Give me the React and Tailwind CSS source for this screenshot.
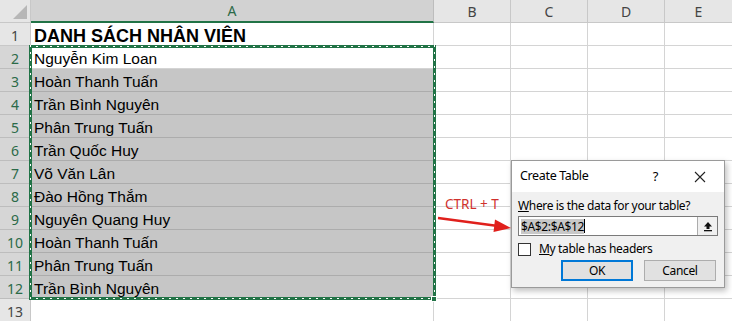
import React from "react";

const names = [
  "Nguyễn Kim Loan",
  "Hoàn Thanh Tuấn",
  "Trần Bình Nguyên",
  "Phân Trung Tuấn",
  "Trần Quốc Huy",
  "Võ Văn Lân",
  "Đào Hồng Thắm",
  "Nguyên Quang Huy",
  "Hoàn Thanh Tuấn",
  "Phân Trung Tuấn",
  "Trần Bình Nguyên",
];

const cellFont = { fontFamily: '"Liberation Sans", Arial, sans-serif' };
const uiFont = { fontFamily: '"Noto Sans", "Open Sans", sans-serif' };

function Row({ n, children, sel, bold, white }) {
  return (
    <div className="flex h-[23px]">
      <div
        className={`w-[31px] shrink-0 border-r border-b flex items-center justify-center pt-[3px] text-[14px] ${
          sel
            ? "bg-[#d6d6d6] text-[#2b6a48] border-b-[#bdbdbd] border-r-[#217346]"
            : "bg-[#e6e6e6] text-[#444] border-[#c8c8c8]"
        }`}
        style={uiFont}
      >
        {n}
      </div>
      <div
        className={`w-[403px] shrink-0 border-r border-b flex items-center pl-[3px] pt-[4px] text-black overflow-hidden whitespace-nowrap ${
          white ? "bg-white border-[#d4d4d4]" : sel ? "bg-[#c6c6c6] border-[#acacac]" : "bg-white border-[#d4d4d4]"
        } ${bold ? "font-bold text-[18px]" : "text-[15.5px]"}`}
        style={cellFont}
      >
        {children}
      </div>
      <div className="w-[77px] shrink-0 border-r border-b border-[#d4d4d4] bg-white" />
      <div className="w-[77px] shrink-0 border-r border-b border-[#d4d4d4] bg-white" />
      <div className="w-[77px] shrink-0 border-r border-b border-[#d4d4d4] bg-white" />
      <div className="flex-1 border-b border-[#d4d4d4] bg-white" />
    </div>
  );
}

export default function App() {
  return (
    <div className="relative w-[732px] h-[321px] overflow-hidden bg-white select-none">
      {/* column header */}
      <div className="flex h-[23px] text-[14px] text-[#444]" style={uiFont}>
        <div className="relative w-[31px] shrink-0 bg-[#e6e6e6] border-r border-b border-[#c8c8c8]">
          <svg className="absolute right-[3px] bottom-[3px]" width="14" height="14" viewBox="0 0 14 14">
            <polygon points="14,0 14,14 0,14" fill="#b7b7b7" />
          </svg>
        </div>
        <div className="w-[403px] shrink-0 bg-[#d2d2d2] border-r border-[#bdbdbd] border-b-2 border-b-[#217346] flex items-center justify-center text-[#2b6a48]">
          A
        </div>
        <div className="w-[77px] shrink-0 bg-[#e6e6e6] border-r border-b border-[#c8c8c8] flex items-center justify-center">B</div>
        <div className="w-[77px] shrink-0 bg-[#e6e6e6] border-r border-b border-[#c8c8c8] flex items-center justify-center">C</div>
        <div className="w-[77px] shrink-0 bg-[#e6e6e6] border-r border-b border-[#c8c8c8] flex items-center justify-center">D</div>
        <div className="flex-1 bg-[#e6e6e6] border-b border-[#c8c8c8] flex items-center justify-center">E</div>
      </div>

      <Row n={1} bold>DANH SÁCH NHÂN VIÊN</Row>
      {names.map((name, i) => (
        <Row key={i} n={i + 2} sel white={i === 0}>
          {name}
        </Row>
      ))}
      <Row n={13} />

      {/* marquee (overlay) */}
      <div className="absolute left-[29px] top-[45px] w-[407px] h-[3px] bg-[#217346] flex items-center">
        <div className="w-full h-px bg-[repeating-linear-gradient(90deg,#ffffff_0px,#ffffff_2px,transparent_2px,transparent_7px)]" />
      </div>
      <div className="absolute left-[29px] top-[297px] w-[407px] h-[3px] bg-[#217346] flex items-center">
        <div className="w-full h-px bg-[repeating-linear-gradient(90deg,#ffffff_0px,#ffffff_2px,transparent_2px,transparent_7px)]" />
      </div>
      <div className="absolute left-[29px] top-[45px] w-[3px] h-[255px] bg-[#217346] flex justify-center">
        <div className="h-full w-px bg-[repeating-linear-gradient(180deg,#ffffff_0px,#ffffff_2px,transparent_2px,transparent_7px)]" />
      </div>
      <div className="absolute left-[433px] top-[45px] w-[3px] h-[255px] bg-[#217346] flex justify-center">
        <div className="h-full w-px bg-[repeating-linear-gradient(180deg,#ffffff_0px,#ffffff_2px,transparent_2px,transparent_7px)]" />
      </div>
      <div className="absolute left-[431px] top-[296px] w-[6px] h-[6px] bg-[#217346] border border-white" />

      {/* annotation */}
      <div className="absolute left-[445px] top-[194px] text-[13.5px] text-[#d0312d]" style={uiFont}>
        CTRL + T
      </div>
      <svg className="absolute left-[436px] top-[210px]" width="80" height="26" viewBox="0 0 80 26">
        <line x1="2" y1="8" x2="62" y2="16" stroke="#e0201c" strokeWidth="2.5" />
        <polygon points="75,18 59,9.5 57.5,22" fill="#e0201c" />
      </svg>

      {/* dialog */}
      <div
        className="absolute left-[511px] top-[160px] w-[214px] h-[128px] border border-[#9a9a9a] bg-[#f0f0f0] shadow-[2px_3px_6px_rgba(0,0,0,0.25)] flex flex-col text-[12px] tracking-[-0.35px] text-black"
        style={uiFont}
      >
        <div className="h-[31px] bg-white flex items-center pl-[8px] pr-[18px]">
          <span className="text-[12.5px]">Create Table</span>
          <span className="ml-auto mr-[36px] text-[13px]">?</span>
          <svg width="12" height="12" viewBox="0 0 12 12">
            <path d="M1 1 L11 11 M11 1 L1 11" stroke="#222" strokeWidth="1.1" />
          </svg>
        </div>
        <div className="flex flex-col px-[6px] pt-[6px]">
          <div className="leading-[16px] text-[12px]">
            <span className="underline">W</span>here is the data for your table?
          </div>
          <div className="mt-[2px] flex h-[20px] border border-[#7a7a7a] bg-white">
            <div className="flex-1 flex items-center pl-[2px]">
              <span className="bg-[#c8c8c8] text-[12px] leading-[15px]">$A$2:$A$12</span>
              <span className="w-px h-[14px] bg-black" />
            </div>
            <div className="w-[20px] border-l border-[#acacac] bg-[#f0f0f0] flex items-center justify-center">
              <svg width="10" height="11" viewBox="0 0 10 11">
                <path d="M5 1 L1 5.5 H3.5 V8 H6.5 V5.5 H9 Z" fill="#111" />
                <rect x="1" y="9" width="8" height="1.3" fill="#111" />
              </svg>
            </div>
          </div>
          <div className="mt-[6px] flex items-center">
            <div className="w-[13px] h-[13px] border border-[#333] bg-white" />
            <span className="ml-[8px] leading-[14px]">
              <span className="underline">M</span>y table has headers
            </span>
          </div>
          <div className="mt-[4px] flex justify-end gap-[11px] pr-[2px]">
            <div className="w-[72px] h-[21px] border-2 border-[#0078d7] bg-[#e1e1e1] flex items-center justify-center">OK</div>
            <div className="w-[72px] h-[21px] border border-[#adadad] bg-[#e1e1e1] flex items-center justify-center">Cancel</div>
          </div>
        </div>
      </div>
    </div>
  );
}
